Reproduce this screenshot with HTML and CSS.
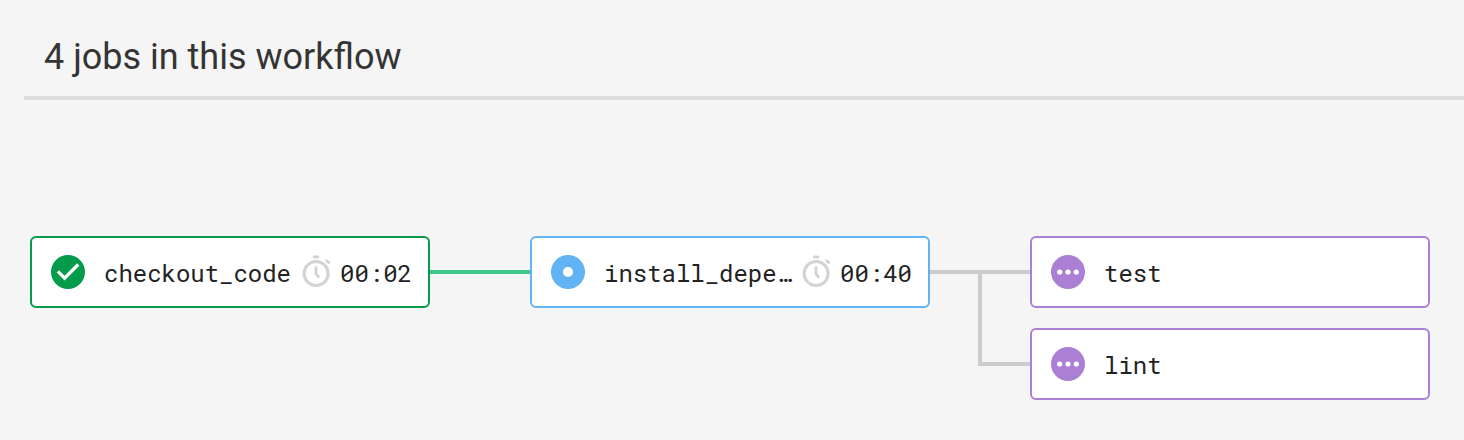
FILE: index.html
```html
<!DOCTYPE html>
<html lang="en">
<head>
<meta charset="utf-8">
<title>Workflow</title>
<link rel="stylesheet" href="styles.css">
</head>
<body>
<svg class="defs" width="0" height="0">
  <symbol id="timer" viewBox="0 0 30 34">
    <g fill="none" stroke="#d3d3d3" stroke-width="3.1">
      <circle cx="15.1" cy="18.5" r="12"/>
      <path d="M13.3 2H16.9M15 12.7V19L17.4 21.7M25.7 5.8L27.7 7.5" stroke-linecap="round" stroke-width="2.9"/>
    </g>
  </symbol>
  <symbol id="queued" viewBox="0 0 34 34">
    <circle cx="17" cy="17" r="17" fill="#aa7fd4"/>
    <g fill="#fff"><circle cx="8.7" cy="17" r="2.6"/><circle cx="17" cy="17" r="2.6"/><circle cx="25.3" cy="17" r="2.6"/></g>
  </symbol>
</svg>
<header class="header"><h1 class="title">4 jobs in this workflow</h1></header>
<main class="graph">
  <a class="job success">
    <svg class="status" viewBox="0 0 34 34"><circle cx="17" cy="17" r="17" fill="#049b4a"/><path d="M6.9 16.4L13.6 23.1L27.2 9.5" fill="none" stroke="#fff" stroke-width="3.3"/></svg>
    <span class="name">checkout_code</span>
    <svg class="timer"><use href="#timer"/></svg><span class="time">00:02</span>
  </a>
  <div class="link"></div>
  <a class="job running">
    <svg class="status" viewBox="0 0 34 34"><circle cx="17" cy="17" r="17" fill="#61b3f4"/><circle cx="17" cy="17" r="5.1" fill="#fff"/></svg>
    <span class="name">install_depe…</span>
    <svg class="timer"><use href="#timer"/></svg><span class="time">00:40</span>
  </a>
  <svg class="branch" viewBox="0 0 100 164"><path d="M0 36H100M50 36V128H100" fill="none" stroke="#ccc" stroke-width="4"/></svg>
  <div class="column">
    <a class="job queued"><svg class="status"><use href="#queued"/></svg><span class="name">test</span></a>
    <a class="job queued"><svg class="status"><use href="#queued"/></svg><span class="name">lint</span></a>
  </div>
</main>
</body>
</html>
```
FILE: styles.css
```css
* { box-sizing: border-box; }
body { margin: 0; height: 440px; overflow: hidden; background: #f5f5f5; }
.defs { display: none; }
.header { height: 100px; margin-left: 24px; padding: 35px 20px 0; border-bottom: 4px solid #ddd; }
.title { margin: 0; font: 400 36px/44px Roboto, sans-serif; color: #343434; }
.graph { display: flex; align-items: flex-start; padding: 136px 0 0 30px; }
.job { display: flex; align-items: center; flex: none; width: 400px; height: 72px; padding: 0 16px 0 19px; border: 2px solid; border-radius: 6px; background: #fff; }
.success { border-color: #049b4a; }
.running { border-color: #61b3f4; }
.queued { border-color: #aa7fd4; }
.status { flex: none; width: 34px; height: 34px; margin-right: 19px; }
.name, .time { font: 24px/32px "Roboto Mono", "DejaVu Sans Mono", monospace; letter-spacing: -0.02px; color: #222; white-space: nowrap; padding-top: 1px; }
.timer { flex: none; width: 30px; height: 34px; margin: 0 9px 0 auto; }
.link { flex: none; width: 100px; height: 4px; margin-top: 34px; background: #42c88a; }
.branch { flex: none; width: 100px; height: 164px; }
.column { display: flex; flex-direction: column; gap: 20px; }
```
